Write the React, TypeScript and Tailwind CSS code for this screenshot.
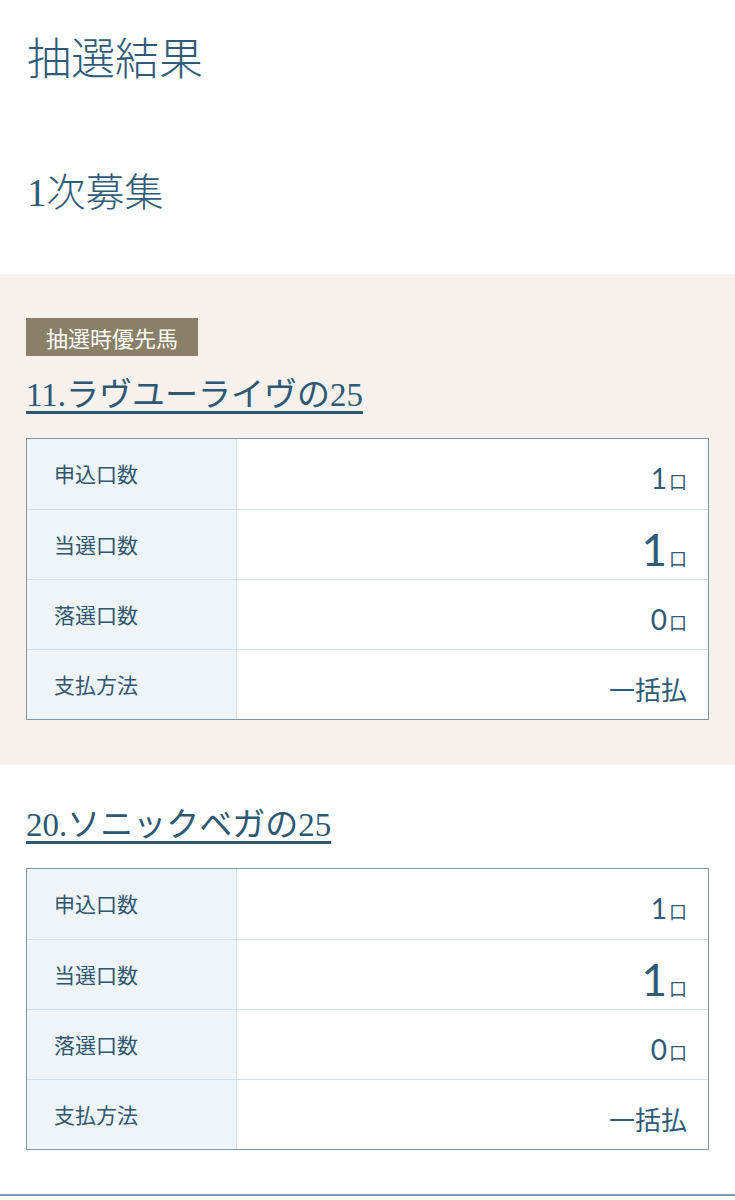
import React from 'react';

const SERIF = { fontFamily: '"Liberation Serif", "Noto Sans CJK JP", serif' };
const SANS = { fontFamily: '"Noto Sans CJK JP", "Noto Sans", sans-serif' };
const NUM = { fontFamily: 'Lato, "Noto Sans CJK JP", sans-serif' };

type Row = { label: string; value: React.ReactNode };

function Count({ n, big }: { n: string; big?: boolean }) {
  return (
    <span className="inline-flex items-baseline">
      <span className={big ? 'text-[44px] leading-none' : 'text-[28px] leading-none'} style={NUM}>{n}</span>
      <span className="text-[18px] leading-none ml-[2px]" style={SANS}>口</span>
    </span>
  );
}

const ROWS: Row[] = [
  { label: '申込口数', value: <Count n="1" /> },
  { label: '当選口数', value: <Count n="1" big /> },
  { label: '落選口数', value: <Count n="0" /> },
  { label: '支払方法', value: <span className="text-[26px] leading-none">一括払</span> },
];

function ResultTable() {
  return (
    <div className="border border-[#7b97ab] bg-white">
      {ROWS.map((r, i) => (
        <div key={r.label} className={`flex h-[70px] ${i > 0 ? 'border-t border-[#d2dfe8]' : ''}`}>
          <div className="w-[210px] shrink-0 bg-[#eef4f7] border-r border-[#d2dfe8] flex items-center pl-[27px] text-[21px] text-[#2f5570]">
            {r.label}
          </div>
          <div className="flex-1 flex items-center justify-end pr-[21px] pt-[8px] text-[#2f5a78]">
            {r.value}
          </div>
        </div>
      ))}
    </div>
  );
}

function HorseTitle({ children }: { children: string }) {
  return (
    <div className="text-[33px] leading-[46px] text-[#2d5874] underline decoration-[3px] underline-offset-[5px]" style={SERIF}>
      {children}
    </div>
  );
}

export default function App() {
  return (
    <div className="w-[735px] h-[1200px] overflow-hidden bg-white text-[#2f5a78]" style={SANS}>
      <div className="px-[27px] pt-[26px]">
        <h1 className="text-[44px] leading-[60px] font-light text-[#2f5a78]">抽選結果</h1>
        <h2 className="mt-[80px] text-[39px] leading-[54px] font-light text-[#2f5a78]" style={SERIF}>1次募集</h2>
      </div>

      <div className="mt-[54px] bg-[#f6f1ec] px-[26px] pt-[44px] pb-[45px]">
        <span className="inline-block bg-[#8a8068] text-white text-[22px] leading-[38px] px-[20px]">抽選時優先馬</span>
        <div className="mt-[16px]">
          <HorseTitle>11.ラヴユーライヴの25</HorseTitle>
        </div>
        <div className="mt-[20px]">
          <ResultTable />
        </div>
      </div>

      <div className="px-[26px] pt-[37px]">
        <HorseTitle>20.ソニックベガの25</HorseTitle>
        <div className="mt-[20px]">
          <ResultTable />
        </div>
      </div>

      <div className="mt-[44px] border-t-2 border-[#7a9db5]" />
    </div>
  );
}
